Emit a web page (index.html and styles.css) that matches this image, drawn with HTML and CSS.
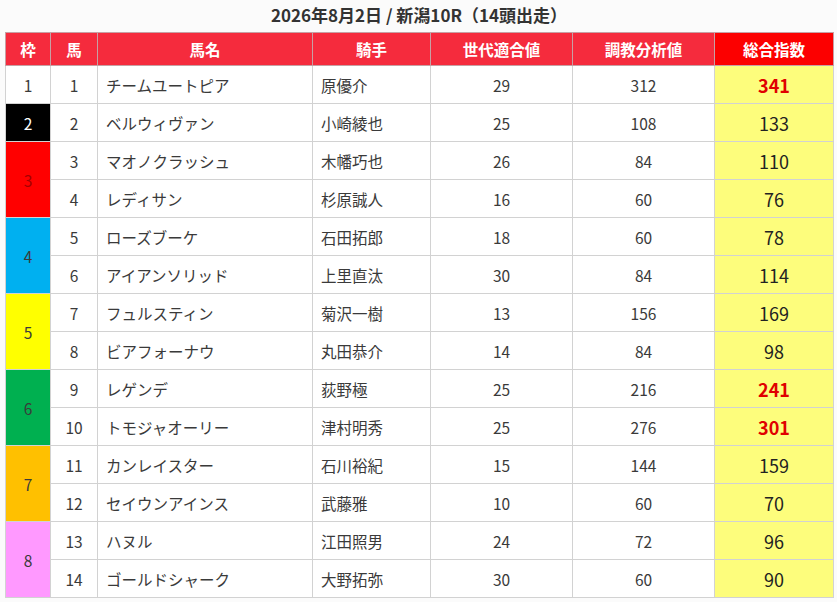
FILE: index.html
```html
<!DOCTYPE html>
<html lang="ja">
<head>
<meta charset="utf-8">
<title>新潟10R</title>
<link rel="stylesheet" href="styles.css">
</head>
<body>
<div class="wrap">
  <h1 class="title">2026年8月2日 / 新潟10R（14頭出走）</h1>
  <table class="race">
    <colgroup>
      <col class="c-waku"><col class="c-uma"><col class="c-name"><col class="c-jockey"><col class="c-gen"><col class="c-train"><col class="c-total">
    </colgroup>
    <thead>
      <tr><th>枠</th><th>馬</th><th>馬名</th><th>騎手</th><th>世代適合値</th><th>調教分析値</th><th class="th-total">総合指数</th></tr>
    </thead>
    <tbody>
      <tr><td class="waku w1">1</td><td>1</td><td class="txt">チームユートピア</td><td class="txt">原優介</td><td>29</td><td>312</td><td class="total hi">341</td></tr>
      <tr><td class="waku w2">2</td><td>2</td><td class="txt">ベルウィヴァン</td><td class="txt">小崎綾也</td><td>25</td><td>108</td><td class="total">133</td></tr>
      <tr><td class="waku w3" rowspan="2">3</td><td>3</td><td class="txt">マオノクラッシュ</td><td class="txt">木幡巧也</td><td>26</td><td>84</td><td class="total">110</td></tr>
      <tr><td>4</td><td class="txt">レディサン</td><td class="txt">杉原誠人</td><td>16</td><td>60</td><td class="total">76</td></tr>
      <tr><td class="waku w4" rowspan="2">4</td><td>5</td><td class="txt">ローズブーケ</td><td class="txt">石田拓郎</td><td>18</td><td>60</td><td class="total">78</td></tr>
      <tr><td>6</td><td class="txt">アイアンソリッド</td><td class="txt">上里直汰</td><td>30</td><td>84</td><td class="total">114</td></tr>
      <tr><td class="waku w5" rowspan="2">5</td><td>7</td><td class="txt">フュルスティン</td><td class="txt">菊沢一樹</td><td>13</td><td>156</td><td class="total">169</td></tr>
      <tr><td>8</td><td class="txt">ビアフォーナウ</td><td class="txt">丸田恭介</td><td>14</td><td>84</td><td class="total">98</td></tr>
      <tr><td class="waku w6" rowspan="2">6</td><td>9</td><td class="txt">レゲンデ</td><td class="txt">荻野極</td><td>25</td><td>216</td><td class="total hi">241</td></tr>
      <tr><td>10</td><td class="txt">トモジャオーリー</td><td class="txt">津村明秀</td><td>25</td><td>276</td><td class="total hi">301</td></tr>
      <tr><td class="waku w7" rowspan="2">7</td><td>11</td><td class="txt">カンレイスター</td><td class="txt">石川裕紀</td><td>15</td><td>144</td><td class="total">159</td></tr>
      <tr><td>12</td><td class="txt">セイウンアインス</td><td class="txt">武藤雅</td><td>10</td><td>60</td><td class="total">70</td></tr>
      <tr><td class="waku w8" rowspan="2">8</td><td>13</td><td class="txt">ハヌル</td><td class="txt">江田照男</td><td>24</td><td>72</td><td class="total">96</td></tr>
      <tr><td>14</td><td class="txt">ゴールドシャーク</td><td class="txt">大野拓弥</td><td>30</td><td>60</td><td class="total">90</td></tr>
    </tbody>
  </table>
</div>
</body>
</html>
```

FILE: styles.css
```css
html, body {
  margin: 0;
  padding: 0;
  background: #fbfbfb;
}
body {
  font-family: "Noto Sans CJK JP", "Noto Sans", sans-serif;
  color: #333;
}
.wrap {
  padding: 4px 4px 0 5px;
}
.title {
  margin: 0;
  height: 28px;
  font-size: 17px;
  line-height: 22px;
  font-weight: 700;
  text-align: center;
  color: #333;
}
.race {
  width: 828px;
  border-collapse: collapse;
  table-layout: fixed;
  background: #fff;
}
.c-waku { width: 45px; }
.c-uma { width: 47px; }
.c-name { width: 215px; }
.c-jockey { width: 118px; }
.c-gen { width: 142px; }
.c-train { width: 142px; }
.c-total { width: 119px; }
.race th {
  height: 32px;
  padding: 0;
  background: #f52b3d;
  color: #fff;
  font-size: 15.5px;
  font-weight: 700;
  border: 1px solid #c7a0a4;
  text-align: center;
}
.race th.th-total {
  background: #fc0000;
}
.race td {
  height: 37px;
  padding: 0;
  border: 1px solid #d2d2d2;
  text-align: center;
  font-size: 15.5px;
  color: #3a3a3a;
}
.race td.txt {
  text-align: left;
  padding-left: 8px;
}
.race td.total {
  background: #fdfd7c;
  font-size: 18px;
  color: #222;
}
.race td.total.hi {
  color: #e00000;
  font-weight: 700;
}
.waku.w1 { background: #fff; }
.waku.w2 { background: #000; color: #fff; }
.waku.w3 { background: #ff0000; color: #a40000; }
.waku.w4 { background: #00b0f0; }
.waku.w5 { background: #ffff00; }
.waku.w6 { background: #00b050; }
.waku.w7 { background: #ffc000; }
.waku.w8 { background: #ff99ff; }
```
